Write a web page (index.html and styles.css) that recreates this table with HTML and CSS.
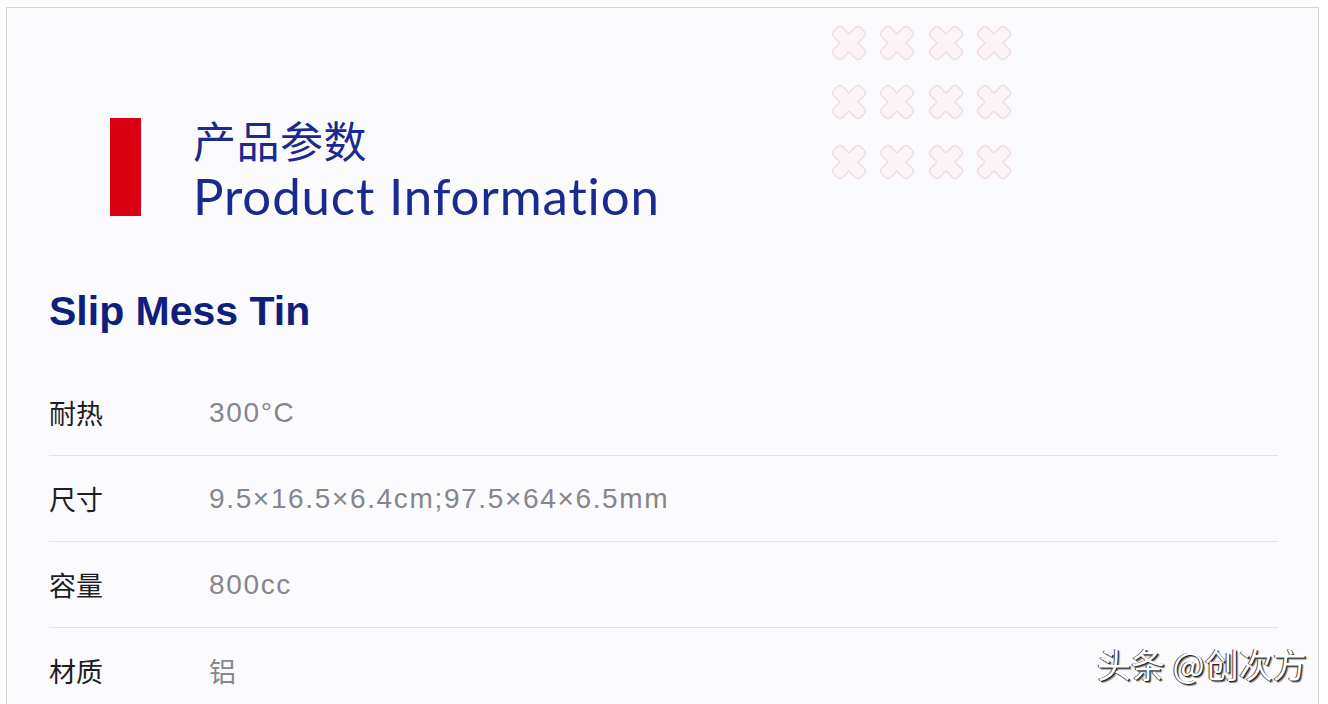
FILE: index.html
```html
<!DOCTYPE html>
<html lang="zh">
<head>
<meta charset="utf-8">
<title>Product Information</title>
<link rel="stylesheet" href="styles.css">
</head>
<body>
<div class="card">
  <svg class="pattern" width="200" height="170" viewBox="0 0 200 170" aria-hidden="true">
    <defs>
      <path id="x" d="M-6,-15 L0,-9 L6,-15 Q9,-18 12,-15 L15,-12 Q18,-9 15,-6 L9,0 L15,6 Q18,9 15,12 L12,15 Q9,18 6,15 L0,9 L-6,15 Q-9,18 -12,15 L-15,12 Q-18,9 -15,6 L-9,0 L-15,-6 Q-18,-9 -15,-12 L-12,-15 Q-9,-18 -6,-15 Z"/>
    </defs>
    <g class="xs">
      <use href="#x" x="17" y="17"/><use href="#x" x="65" y="17"/><use href="#x" x="114" y="17"/><use href="#x" x="162" y="17"/>
      <use href="#x" x="17" y="76"/><use href="#x" x="65" y="76"/><use href="#x" x="114" y="76"/><use href="#x" x="162" y="76"/>
      <use href="#x" x="17" y="136"/><use href="#x" x="65" y="136"/><use href="#x" x="114" y="136"/><use href="#x" x="162" y="136"/>
    </g>
  </svg>
  <header class="head">
    <div class="bar"></div>
    <div class="titles">
      <div class="title-cn">产品参数</div>
      <div class="title-en">Product Information</div>
    </div>
  </header>
  <h1 class="name">Slip Mess Tin</h1>
  <div class="specs">
    <div class="row"><span class="label">耐热</span><span class="value">300°C</span></div>
    <div class="row"><span class="label">尺寸</span><span class="value">9.5×16.5×6.4cm;97.5×64×6.5mm</span></div>
    <div class="row"><span class="label">容量</span><span class="value">800cc</span></div>
    <div class="row"><span class="label">材质</span><span class="value cn">铝</span></div>
  </div>
  <div class="mark">头条 @创次方</div>
</div>
</body>
</html>
```
FILE: styles.css
```css
html, body {
  margin: 0;
  padding: 0;
  background: #ffffff;
  overflow: hidden;
}
body {
  height: 704px;
  font-family: "Noto Sans CJK SC", sans-serif;
}
.card {
  position: relative;
  margin: 7px 9px 0 6px;
  height: 760px;
  border: 1px solid #d4d4da;
  background: #fbfafd;
  box-sizing: border-box;
}
.pattern {
  position: absolute;
  left: 825px;
  top: 18px;
}
.xs use {
  fill: #fcf5f8;
  stroke: #f2dbe4;
  stroke-width: 1.5;
}
.head {
  display: flex;
  align-items: flex-start;
  padding: 110px 0 0 103px;
}
.bar {
  width: 31px;
  height: 98px;
  background: #d9000f;
}
.titles {
  margin: -7px 0 0 52px;
  color: #1b2a8e;
}
.title-cn {
  font-family: "Noto Sans CJK SC", sans-serif;
  font-size: 43px;
  line-height: 57px;
  font-weight: 400;
  letter-spacing: 0.5px;
}
.title-en {
  font-family: "Lato", sans-serif;
  font-size: 51px;
  line-height: 56px;
  letter-spacing: 0.85px;
}
.name {
  margin: 63px 0 0 42px;
  font-family: "Liberation Sans", Arial, sans-serif;
  font-weight: 700;
  font-size: 41px;
  line-height: 48px;
  color: #0e1f7c;
}
.specs {
  margin: 35px 40px 0 42px;
}
.row {
  display: flex;
  align-items: center;
  height: 85px;
  border-bottom: 1px solid #e2e2e6;
}
.label {
  width: 160px;
  font-size: 27px;
  color: #1e1e22;
}
.value {
  font-family: "Liberation Sans", Arial, sans-serif;
  font-size: 28px;
  letter-spacing: 1.65px;
  color: #86868b;
}
.value.cn {
  font-family: "Noto Sans CJK SC", sans-serif;
  font-size: 27px;
  letter-spacing: 0;
}
.mark {
  position: absolute;
  left: 1090px;
  top: 636px;
  font-size: 34px;
  line-height: 40px;
  color: #ffffff;
  text-shadow: 1px 1px 0 #222, -1px 0 0 #444, 2px 2px 1px rgba(0,0,0,0.5);
}
```
